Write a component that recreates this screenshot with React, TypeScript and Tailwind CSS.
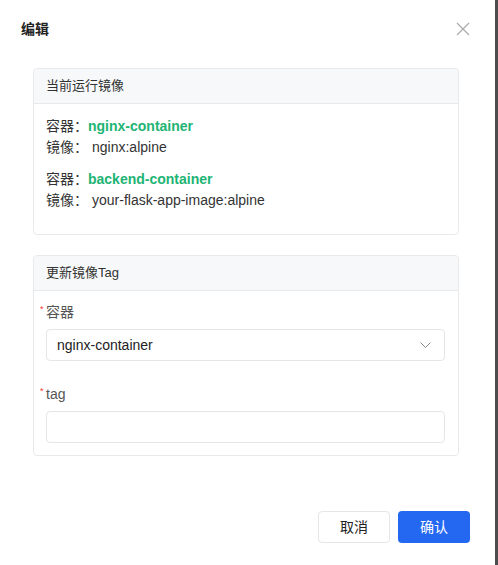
import React, { useState } from 'react';

const font = { fontFamily: '"Liberation Sans", "Noto Sans CJK SC", sans-serif' };

interface RunningImage {
  container: string;
  image: string;
}

const runningImages: RunningImage[] = [
  { container: 'nginx-container', image: 'nginx:alpine' },
  { container: 'backend-container', image: 'your-flask-app-image:alpine' },
];

const Card: React.FC<{ title: string; children: React.ReactNode }> = ({ title, children }) => (
  <section className="rounded-[4px] border border-[#e8e9eb] bg-white">
    <div className="flex h-[35px] items-center rounded-t-[4px] border-b border-[#e8e9eb] bg-[#f7f8fa] px-3 text-[13px] text-[#333]">
      {title}
    </div>
    {children}
  </section>
);

const FieldLabel: React.FC<{ children: React.ReactNode }> = ({ children }) => (
  <div className="relative mb-[7px] flex h-5 items-center text-[14px] text-[#555]">
    <span className="absolute -left-[6px] top-[3px] text-[9px] leading-none text-[#f33]">*</span>
    {children}
  </div>
);

export default function App() {
  const [tag, setTag] = useState('');

  return (
    <div className="flex h-[565px] w-[498px] bg-[#4d4d4d]" style={font}>
      <div className="flex w-[495px] flex-col bg-white">
        <header className="flex h-[58px] items-center justify-between pl-[21px] pr-[25px]">
          <h2 className="text-[14px] font-bold text-[#222]">编辑</h2>
          <button type="button" className="text-[#aaa]" aria-label="close">
            <svg width="14" height="14" viewBox="0 0 14 14" fill="none" stroke="currentColor" strokeWidth="1.2">
              <path d="M1 1l12 12M13 1L1 13" />
            </svg>
          </button>
        </header>

        <div className="mt-[10px] flex flex-col gap-5 pl-[33px] pr-[36px]">
          <Card title="当前运行镜像">
            <div className="flex flex-col gap-[11px] px-3 pb-[23px] pt-[12px] text-[14px] leading-[21px] text-[#333]">
              {runningImages.map(item => (
                <div key={item.container}>
                  <div>
                    容器：<span className="font-bold text-[#1db474]">{item.container}</span>
                  </div>
                  <div>
                    镜像：<span className="ml-1">{item.image}</span>
                  </div>
                </div>
              ))}
            </div>
          </Card>

          <Card title="更新镜像Tag">
            <div className="px-3 pb-3 pr-[13px] pt-[11px]">
              <FieldLabel>容器</FieldLabel>
              <button
                type="button"
                className="flex h-8 w-full items-center justify-between rounded-[4px] border border-[#e4e6ea] bg-white pl-[10px] pr-[13px] text-[14px] text-[#222]"
              >
                nginx-container
                <svg width="11" height="6" viewBox="0 0 11 6" fill="none" stroke="#888" strokeWidth="1">
                  <path d="M0.5 0.5l5 5 5-5" />
                </svg>
              </button>

              <div className="mt-[23px]">
                <FieldLabel>tag</FieldLabel>
                <input
                  value={tag}
                  onChange={event => setTag(event.target.value)}
                  className="h-8 w-full rounded-[4px] border border-[#e4e6ea] bg-white px-[10px] text-[14px] outline-none"
                />
              </div>
            </div>
          </Card>
        </div>

        <footer className="mt-auto flex justify-end gap-2 pb-[22px] pr-[25px]">
          <button
            type="button"
            className="h-8 w-[72px] rounded-[4px] border border-[#e4e6ea] bg-white text-[14px] text-[#222]"
          >
            取消
          </button>
          <button type="button" className="h-8 w-[72px] rounded-[4px] bg-[#2468f2] text-[14px] text-white">
            确认
          </button>
        </footer>
      </div>
    </div>
  );
}
